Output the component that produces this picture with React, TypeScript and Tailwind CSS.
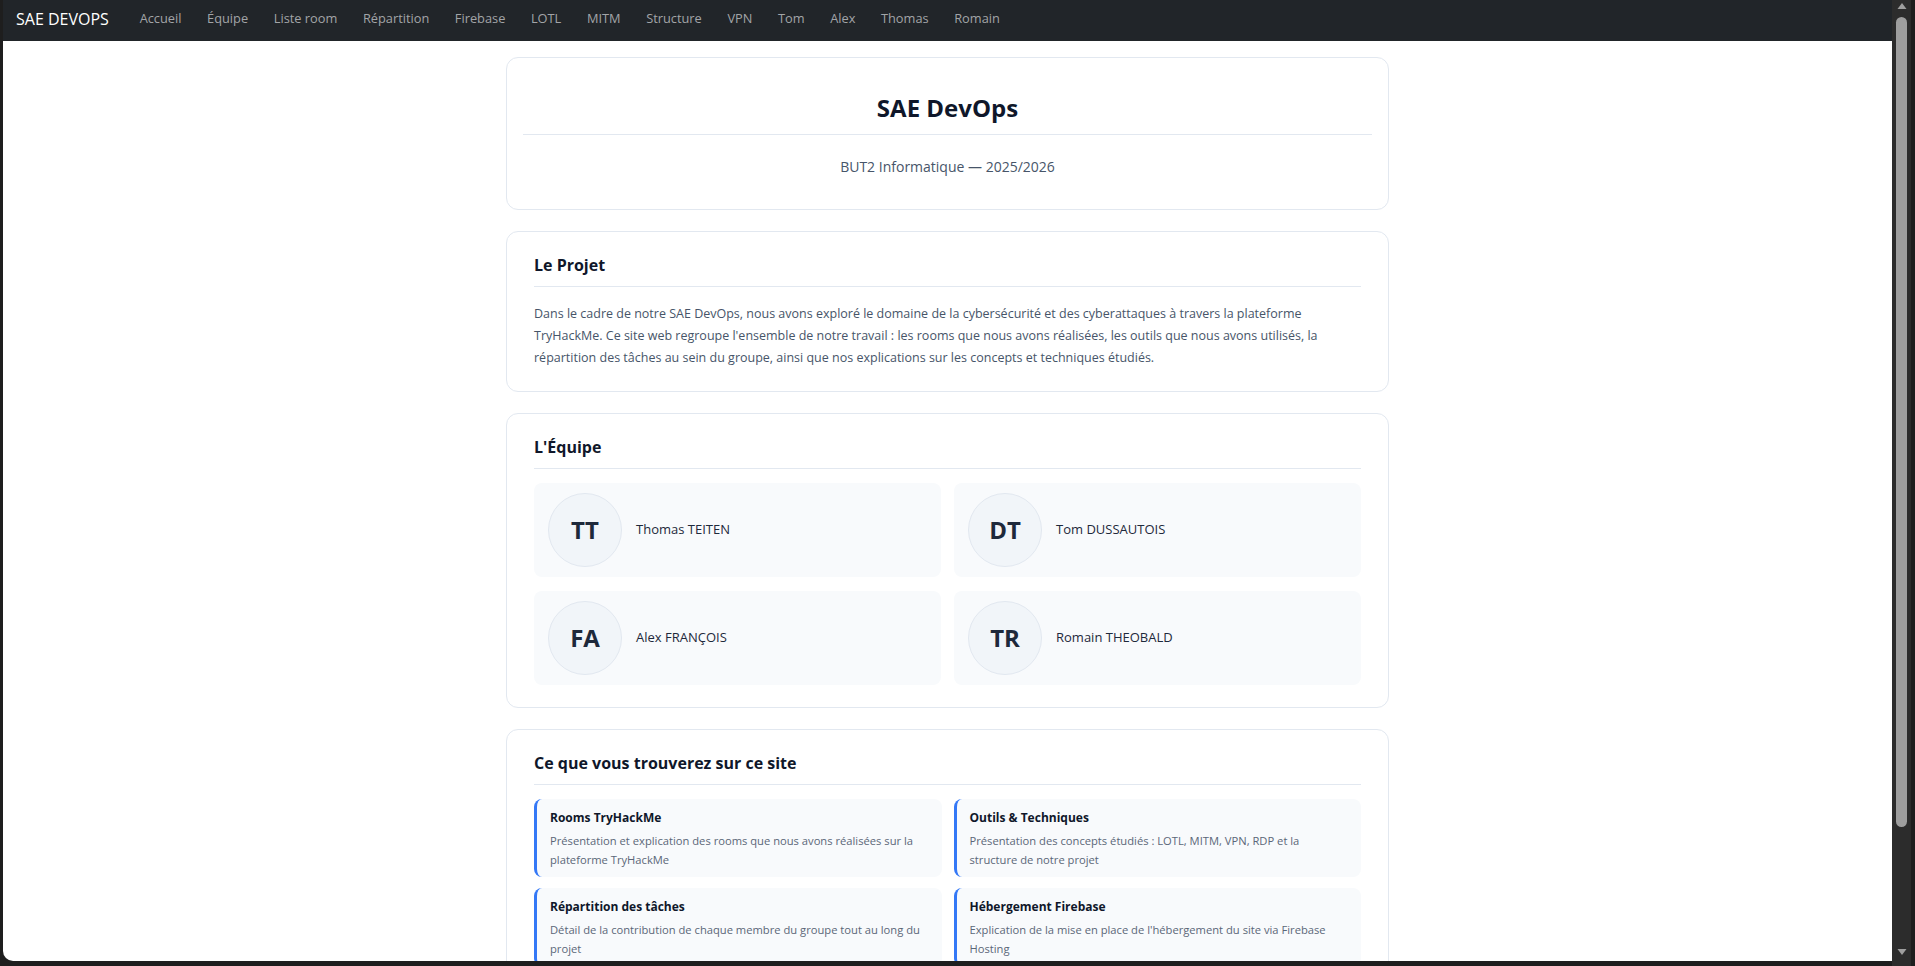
import React from 'react';

const NAV_LINKS = ['Accueil', 'Équipe', 'Liste room', 'Répartition', 'Firebase', 'LOTL', 'MITM', 'Structure', 'VPN', 'Tom', 'Alex', 'Thomas', 'Romain'];

const MEMBERS = [
  { initials: 'TT', name: 'Thomas TEITEN' },
  { initials: 'DT', name: 'Tom DUSSAUTOIS' },
  { initials: 'FA', name: 'Alex FRANÇOIS' },
  { initials: 'TR', name: 'Romain THEOBALD' },
];

const FEATURES = [
  {
    title: 'Rooms TryHackMe',
    text: 'Présentation et explication des rooms que nous avons réalisées sur la plateforme TryHackMe',
  },
  {
    title: 'Outils & Techniques',
    text: 'Présentation des concepts étudiés : LOTL, MITM, VPN, RDP et la structure de notre projet',
  },
  {
    title: 'Répartition des tâches',
    text: 'Détail de la contribution de chaque membre du groupe tout au long du projet',
  },
  {
    title: 'Hébergement Firebase',
    text: "Explication de la mise en place de l'hébergement du site via Firebase Hosting",
  },
];

const Navbar: React.FC = () => (
  <nav className="h-[41px] shrink-0 bg-[#212529] flex items-center pb-[4px]">
    <a className="ml-[13px] text-[16px] text-white leading-none">SAE DEVOPS</a>
    <ul className="flex items-center ml-[18px]">
      {NAV_LINKS.map((link) => (
        <li key={link} className="px-[12.8px] text-[12.8px] leading-none text-[#a2a4a7]">
          {link}
        </li>
      ))}
    </ul>
  </nav>
);

// Shared white card with the heading + rule used by every section
const Section: React.FC<{ title: string; children: React.ReactNode }> = ({ title, children }) => (
  <section className="border border-[#e2e8f0] rounded-[12px] bg-white px-[27px] pt-[21px] pb-[22px]">
    <h2 className="text-[16px] leading-[24px] font-bold text-[#0f172a] pb-[9px] border-b border-[#e2e8f0]">{title}</h2>
    {children}
  </section>
);

const Scrollbar: React.FC = () => (
  <div className="w-[23px] shrink-0 bg-[#2c2c2c] border-r-[4px] border-[#1e1e1e] flex flex-col items-center">
    {/* up arrow */}
    <svg width="10" height="8" viewBox="0 0 10 8" className="mt-[2px]">
      <path d="M5 1 L9.5 7 L0.5 7 Z" fill="#9e9e9e" />
    </svg>
    <div className="mt-[7px] w-[11px] h-[810px] rounded-full bg-[#9e9e9e]" />
    <div className="flex-1" />
    {/* down arrow */}
    <svg width="10" height="8" viewBox="0 0 10 8" className="mb-[10px]">
      <path d="M0.5 1 L9.5 1 L5 7 Z" fill="#9e9e9e" />
    </svg>
  </div>
);

export default function App() {
  return (
    <div className="w-[1915px] h-[966px] overflow-hidden bg-[#1e1e1e] flex font-['Open_Sans','Noto_Sans',sans-serif]">
      <div className="flex-1 flex flex-col ml-[3px] mb-[5px] bg-white rounded-bl-[10px] overflow-hidden">
        <Navbar />

        <main className="flex-1 overflow-hidden pt-[16px]">
          <div className="w-[883px] mx-auto flex flex-col gap-[21px]">
            {/* Hero */}
            <header className="border border-[#e2e8f0] rounded-[12px] bg-white px-[16px] pt-[34px] pb-[30px] text-center">
              <h1 className="text-[24px] leading-[32px] font-bold text-[#0f172a] pb-[10px] border-b border-[#e2e8f0]">SAE DevOps</h1>
              <p className="mt-[20px] text-[14px] leading-[24px] text-[#475569]">BUT2 Informatique — 2025/2026</p>
            </header>

            <Section title="Le Projet">
              <p className="mt-[16px] text-[12.5px] leading-[22px] text-[#475569]">
                Dans le cadre de notre SAE DevOps, nous avons exploré le domaine de la cybersécurité et des cyberattaques à travers la plateforme TryHackMe. Ce site web regroupe l'ensemble de notre travail : les rooms que nous avons réalisées, les outils que nous avons utilisés, la répartition des tâches au sein du groupe, ainsi que nos explications sur les concepts et techniques étudiés.
              </p>
            </Section>

            <Section title="L'Équipe">
              <div className="mt-[14px] grid grid-cols-2 gap-x-[13px] gap-y-[14px]">
                {MEMBERS.map((m) => (
                  <div key={m.name} className="bg-[#f8fafc] rounded-[8px] px-[14px] py-[10px] flex items-center gap-[14px]">
                    <div className="w-[74px] h-[74px] rounded-full bg-[#f1f5f9] border border-[#e2e8f0] flex items-center justify-center text-[24px] font-bold text-[#1e293b]">
                      {m.initials}
                    </div>
                    <span className="text-[13px] font-medium text-[#1e293b]">{m.name}</span>
                  </div>
                ))}
              </div>
            </Section>

            <Section title="Ce que vous trouverez sur ce site">
              <div className="mt-[14px] grid grid-cols-2 gap-x-[12px] gap-y-[11px]">
                {FEATURES.map((f) => (
                  <div key={f.title} className="bg-[#f8fafc] rounded-[8px] border-l-[3px] border-[#3478f6] pl-[13px] pr-[20px] pt-[10px] pb-[8px]">
                    <h3 className="text-[12px] leading-[18px] font-bold text-[#0f172a]">{f.title}</h3>
                    <p className="mt-[5px] text-[11.2px] leading-[18.5px] text-[#5b6778]">{f.text}</p>
                  </div>
                ))}
              </div>
            </Section>
          </div>
        </main>
      </div>
      <Scrollbar />
    </div>
  );
}
